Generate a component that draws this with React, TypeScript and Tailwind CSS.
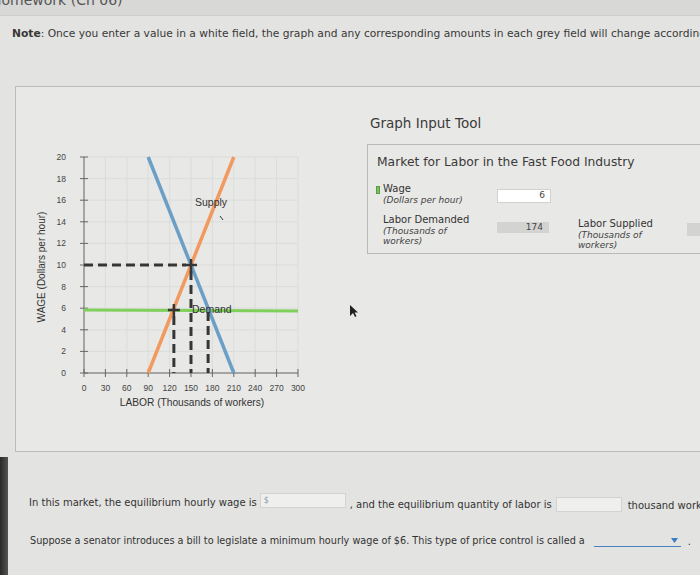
import React from 'react';

const X = (l: number) => 84 + l * 0.7133;
const Y = (w: number) => 373 - w * 10.8;

function LaborGraph() {
  const ticksX = Array.from({ length: 11 }, (_, i) => i * 30);
  const ticksY = Array.from({ length: 11 }, (_, i) => i * 2);
  return (
    <svg width="350" height="364" viewBox="16 87 350 364" className="shrink-0">
      {/* grid */}
      {ticksX.map((t) => (
        <line key={'gx' + t} x1={X(t)} y1={Y(20)} x2={X(t)} y2={Y(0)} stroke="#d8dad8" strokeWidth="0.8" />
      ))}
      {ticksY.map((t) => (
        <line key={'gy' + t} x1={X(0)} y1={Y(t)} x2={X(300)} y2={Y(t)} stroke="#d8dad8" strokeWidth="0.8" />
      ))}

      {/* axes */}
      <line x1={84} y1={Y(20)} x2={84} y2={Y(0)} stroke="#666" strokeWidth="1" />
      <line x1={84} y1={Y(0)} x2={X(300)} y2={Y(0)} stroke="#666" strokeWidth="1" />
      {ticksY.map((t) => (
        <line key={'ty' + t} x1={80} y1={Y(t)} x2={88} y2={Y(t)} stroke="#666" strokeWidth="1" />
      ))}
      {ticksX.map((t) => (
        <line key={'tx' + t} x1={X(t)} y1={369} x2={X(t)} y2={377} stroke="#666" strokeWidth="1" />
      ))}

      <g fontFamily="'Liberation Sans', Arial, sans-serif" fontSize="8.5" fill="#444">
        {ticksY.map((t) => (
          <text key={'ly' + t} x={66} y={Y(t) + 3} textAnchor="end">{t}</text>
        ))}
        {ticksX.map((t) => (
          <text key={'lx' + t} x={X(t)} y={391} textAnchor="middle">{t}</text>
        ))}
        <text x={192} y={406} textAnchor="middle" fontSize="10.2" fill="#333">LABOR (Thousands of workers)</text>
        <text x={0} y={0} transform="translate(45 267) rotate(-90)" textAnchor="middle" fontSize="10" fill="#333">
          WAGE (Dollars per hour)
        </text>
      </g>

      {/* green wage line */}
      <line x1={X(0)} y1={310} x2={X(300)} y2={311} stroke="#7fcf5b" strokeWidth="3" />

      {/* curves */}
      <line x1={X(90)} y1={Y(20)} x2={X(210)} y2={Y(0)} stroke="#6c9fc6" strokeWidth="3.5" />
      <line x1={X(90)} y1={Y(0)} x2={X(210)} y2={Y(20)} stroke="#f2995f" strokeWidth="3.5" />

      {/* dashed guides */}
      <g stroke="#363636" strokeWidth="3" strokeDasharray="9 5">
        <line x1={84} y1={Y(10)} x2={X(150) - 5} y2={Y(10)} />
        <line x1={X(150)} y1={Y(10) + 6} x2={X(150)} y2={373} />
        <line x1={X(126)} y1={316} x2={X(126)} y2={373} />
        <line x1={X(174)} y1={312} x2={X(174)} y2={373} />
      </g>
      <g stroke="#363636" strokeWidth="2.5">
        <line x1={X(150) - 6} y1={Y(10)} x2={X(150) + 6} y2={Y(10)} />
        <line x1={X(150)} y1={Y(10) - 6} x2={X(150)} y2={Y(10) + 6} />
        <line x1={X(126) - 6} y1={310} x2={X(126) + 6} y2={310} />
        <line x1={X(126)} y1={304} x2={X(126)} y2={316} />
      </g>

      <g fontFamily="'Liberation Sans', Arial, sans-serif" fontSize="10.5" fill="#333">
        <text x={195} y={206}>Supply</text>
        <text x={192} y={313}>Demand</text>
      </g>
      <line x1={220} y1={216} x2={223} y2={220} stroke="#333" strokeWidth="1" />

      {/* mouse pointer */}
      <polygon
        points="0,0 0,11 3,8 5,12 6.5,11.3 4.6,7.6 8,7.6"
        transform="translate(350 305)"
        fill="#222"
      />
    </svg>
  );
}

function InputTool() {
  return (
    <div className="flex-1 pl-px">
      <p className="pl-[3px] pt-[27px] text-[13.5px] leading-[18px] text-[#3a3a3a]">Graph Input Tool</p>
      <div className="mt-[12px] h-[110px] w-[360px] border border-[#b9b9b9] pl-[8px]">
        <p className="whitespace-nowrap pl-px pt-[9px] text-[12.3px] leading-[16px] text-[#3a3a3a]">
          Market for Labor in the Fast Food Industry
        </p>
        <div className="mt-[13px] grid grid-cols-[7px_114px_54px_27px_109px_54px] gap-y-[8px]">
          <div className="mt-[3px] h-[8px] w-[4px] border border-[#5d9a45] bg-[#7cc25a]" />
          <div>
            <p className="text-[10px] leading-[12px] text-[#333]">Wage</p>
            <p className="text-[9px] italic leading-[11px] text-[#444]">(Dollars per hour)</p>
          </div>
          <div className="mt-[6px] flex h-[14px] items-center justify-end border border-[#d2d2d2] bg-white pr-[5px] text-[9px] text-[#444]">
            6
          </div>
          <div />
          <div />
          <div />

          <div />
          <div>
            <p className="text-[10px] leading-[12px] text-[#333]">Labor Demanded</p>
            <p className="text-[9px] italic leading-[10px] text-[#444]">(Thousands of</p>
            <p className="text-[9px] italic leading-[10px] text-[#444]">workers)</p>
          </div>
          <div className="mt-[8px] flex h-[11px] w-[52px] items-center justify-end bg-[#d3d3d2] pr-[6px] text-[9px] text-[#444]">
            174
          </div>
          <div />
          <div className="mt-[4px]">
            <p className="text-[10px] leading-[12px] text-[#333]">Labor Supplied</p>
            <p className="text-[9px] italic leading-[10px] text-[#444]">(Thousands of</p>
            <p className="text-[9px] italic leading-[10px] text-[#444]">workers)</p>
          </div>
          <div className="mt-[9px] h-[13px] bg-[#d3d3d2]" />
        </div>
      </div>
    </div>
  );
}

export default function App() {
  return (
    <div className="relative h-[575px] w-[700px] overflow-hidden bg-[#e3e3e1] font-['DejaVu_Sans',sans-serif] text-[#383838]">
      <div className="h-[16px] overflow-hidden border-b border-[#cdcdcb] bg-[#d8d8d6]">
        <p className="-ml-[9px] -mt-[8px] whitespace-nowrap text-[14px] leading-[16px] text-[#555]">Homework (Ch 06)</p>
      </div>

      <p className="whitespace-nowrap pl-[12px] pt-[10px] text-[10.7px] leading-[15px]">
        <span className="font-bold">Note</span>: Once you enter a value in a white field, the graph and any corresponding
        amounts in each grey field will change accordingly.
      </p>

      <div className="ml-[15px] mt-[45px] flex h-[366px] w-[700px] border border-[#bcbcba] bg-[#e8e8e6]">
        <LaborGraph />
        <InputTool />
      </div>

      <div className="mt-[41px] flex items-start whitespace-nowrap pl-[29px] text-[10px] leading-[13px] text-[#333]">
        <span className="mt-[3px] shrink-0">In this market, the equilibrium hourly wage is</span>
        <span className="ml-[3px] flex h-[15px] w-[86px] shrink-0 items-center border border-[#d3d3d1] bg-[#efefed] pl-[3px] text-[8px] text-[#8a9aa8]">
          $
        </span>
        <span className="ml-[4px] mt-[5px] shrink-0">, and the equilibrium quantity of labor is</span>
        <span className="ml-[4px] mt-[4px] h-[15px] w-[66px] shrink-0 border border-[#d3d3d1] bg-[#efefed]" />
        <span className="ml-[6px] mt-[6px] shrink-0">thousand workers.</span>
      </div>

      <div className="mt-[22px] flex items-start whitespace-nowrap pl-[30px] text-[9.7px] leading-[12px] text-[#333]">
        <span className="mt-px shrink-0">
          Suppose a senator introduces a bill to legislate a minimum hourly wage of $6. This type of price control is
          called a
        </span>
        <span className="ml-[9px] flex h-[13px] w-[87px] shrink-0 items-center justify-end border-b-[1.5px] border-[#4a7fc0] pr-[3px]">
          <svg width="7" height="5" viewBox="0 0 7 5">
            <polygon points="0,0 7,0 3.5,5" fill="#3d7bc4" />
          </svg>
        </span>
        <span className="ml-[7px] mt-[2px] shrink-0">.</span>
      </div>

      <div className="absolute bottom-0 left-0 h-[118px] w-[8px] bg-gradient-to-r from-[#2a2a2a] to-[#555]" />
    </div>
  );
}
